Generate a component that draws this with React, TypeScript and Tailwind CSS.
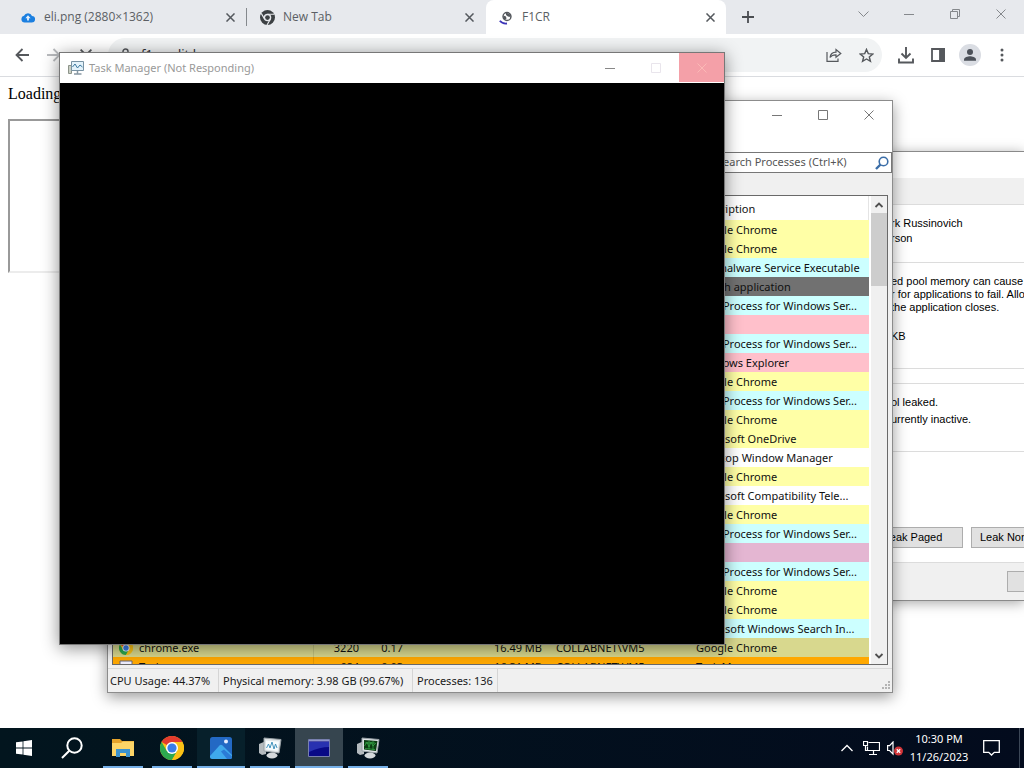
import React from "react";

type Row = { color: string; description: string; name?: string; pid?: string; cpu?: string; mem?: string; user?: string };

const YELLOW = "bg-[#ffffa6]";
const CYAN = "bg-[#ccffff]";
const PINK = "bg-[#ffc0cb]";

const rows: Row[] = [
  { color: YELLOW, description: "Google Chrome" },
  { color: YELLOW, description: "Google Chrome" },
  { color: CYAN, description: "Antimalware Service Executable" },
  { color: "bg-[#717171]", description: "Search application" },
  { color: CYAN, description: "Host Process for Windows Ser..." },
  { color: PINK, description: "" },
  { color: CYAN, description: "Host Process for Windows Ser..." },
  { color: PINK, description: "Windows Explorer" },
  { color: YELLOW, description: "Google Chrome" },
  { color: CYAN, description: "Host Process for Windows Ser..." },
  { color: YELLOW, description: "Google Chrome" },
  { color: YELLOW, description: "Microsoft OneDrive" },
  { color: "bg-white", description: "Desktop Window Manager" },
  { color: YELLOW, description: "Google Chrome" },
  { color: "bg-white", description: "Microsoft Compatibility Tele..." },
  { color: YELLOW, description: "Google Chrome" },
  { color: CYAN, description: "Host Process for Windows Ser..." },
  { color: "bg-[#e4b6d2]", description: "" },
  { color: CYAN, description: "Host Process for Windows Ser..." },
  { color: YELLOW, description: "Google Chrome" },
  { color: YELLOW, description: "Google Chrome" },
  { color: CYAN, description: "Microsoft Windows Search In..." },
  { color: "bg-[#d8d88e]", description: "Google Chrome", name: "chrome.exe", pid: "3220", cpu: "0.17", mem: "16.49 MB", user: "COLLABNET\\VM5" },
  { color: "bg-[#ffa800]", description: "Task Manager", name: "Taskmgr.exe", pid: "684", cpu: "0.03", mem: "16.31 MB", user: "COLLABNET\\VM5" },
];

function Cross({ size = 10, width = 1 }: { size?: number; width?: number }) {
  return (
    <svg width={size} height={size} viewBox="0 0 10 10" fill="none" stroke="currentColor" strokeWidth={width}>
      <path d="M0.5 0.5 9.5 9.5M9.5 0.5 0.5 9.5" />
    </svg>
  );
}
function Dash() {
  return (
    <svg width="10" height="10" viewBox="0 0 10 10" stroke="currentColor">
      <path d="M0 5.5H10" />
    </svg>
  );
}
function Square() {
  return (
    <svg width="10" height="10" viewBox="0 0 10 10" fill="none" stroke="currentColor">
      <path d="M.5.5h9v9h-9z" />
    </svg>
  );
}

function ChromeLogo({ size }: { size: number }) {
  return (
    <svg width={size} height={size} viewBox="0 0 24 24">
      <circle cx="12" cy="12" r="12" fill="#fbc116" />
      <path d="M12 12 1.6 6A12 12 0 0 1 22.4 6H12Z" fill="#e33b2e" />
      <path d="M1.6 6A12 12 0 0 0 12 24l5.2-9L12 12 6.8 15Z" fill="#2da94f" />
      <path d="M12 6h10.4A12 12 0 0 1 12 24l5.2-9Z" fill="#fbc116" />
      <circle cx="12" cy="12" r="6" fill="#fff" />
      <circle cx="12" cy="12" r="4.6" fill="#3a7de8" />
    </svg>
  );
}

function MonoChrome() {
  return (
    <svg width="15" height="15" viewBox="0 0 24 24">
      <circle cx="12" cy="12" r="12" fill="#3c4043" />
      <circle cx="12" cy="12" r="6" fill="#e7e9ed" />
      <circle cx="12" cy="12" r="3.8" fill="#3c4043" />
      <path d="M12 6.8h11M7.4 14.6 2 5.4M16.6 14.6 11.2 24" stroke="#e7e9ed" strokeWidth="1.8" />
    </svg>
  );
}

function Tab({ icon, title, active, divided }: { icon: React.ReactNode; title: string; active?: boolean; divided?: boolean }) {
  return (
    <div
      className={
        active
          ? "flex h-full w-60 shrink items-center gap-2 rounded-t-lg bg-white pl-3 pr-2"
          : "flex h-full w-[239px] shrink items-center gap-2 pl-3"
      }
    >
      <span className="flex w-4 shrink-0 justify-center">{icon}</span>
      <span className="flex-1 truncate text-[#5b5f64]">{title}</span>
      <button aria-label={"Close " + title} className="flex size-4 items-center justify-center text-[#55595e]">
        <Cross size={9} width={1.7} />
      </button>
      {!active && <span className={divided ? "h-[18px] w-px bg-[#85898d]" : "w-px"} />}
    </div>
  );
}

function Browser() {
  return (
    <div className="flex flex-1 flex-col">
      <div className="flex h-[34px] bg-[#e7e9ed] pl-2 text-[12px] font-['Open_Sans','Noto_Sans',sans-serif]">
        <Tab
          divided
          title="eli.png (2880×1362)"
          icon={
            <svg width="14" height="12" viewBox="0 0 14 12">
              <path d="M3.6 11.5A3.4 3.4 0 0 1 3 4.8 4.3 4.3 0 0 1 11 4.9A3.3 3.3 0 0 1 10.6 11.5Z" fill="#1b7fe0" />
              <path d="M7 4.3 9.6 7.2H7.900V9.600H6.100V7.200H4.400Z" fill="#e7f0fa" />
            </svg>
          }
        />
        <Tab title="New Tab" icon={<MonoChrome />} />
        <Tab
          active
          title="F1CR"
          icon={
            <svg width="14" height="15" viewBox="0 0 14 15" fill="none">
              <circle cx="8" cy="6.500" r="4" stroke="#55595e" strokeWidth="1.400" />
              <path d="M4.500 5.500 7 6.500 7.500 8.500 6 10 4.200 8ZM7 2.500 11.500 4.500 11.500 7 9 6.500 7 5Z" fill="#55595e" />
              <path d="M.8 10.800C2.500 13 5 13.800 8 13.500" stroke="#3c35b8" strokeWidth="1.800" />
            </svg>
          }
        />
        <button aria-label="New tab" className="ml-2 flex w-7 items-center justify-center text-[#4a4d51]">
          <svg width="12" height="12" viewBox="0 0 12 12" stroke="currentColor" strokeWidth="1.800">
            <path d="M6 0v12M0 6h12" />
          </svg>
        </button>
        <div className="ml-auto flex h-7 text-[#85888c]">
          <button aria-label="Search tabs" className="flex w-[46px] items-center justify-center">
            <svg width="11" height="10" viewBox="0 0 11 10" fill="none" stroke="currentColor">
              <path d="M.5 2.500 5.500 7.500 10.500 2.500" />
            </svg>
          </button>
          <button aria-label="Minimize" className="flex w-[46px] items-center justify-center"><Dash /></button>
          <button aria-label="Restore" className="flex w-[46px] items-center justify-center">
            <svg width="10" height="10" viewBox="0 0 10 10" fill="none" stroke="currentColor">
              <path d="M.5 2.500h7v7h-7zM2.500 2.500v-2h7v7h-2" />
            </svg>
          </button>
          <button aria-label="Close" className="flex w-[46px] items-center justify-center"><Cross /></button>
        </div>
      </div>

      <div className="flex h-[43px] items-center border-b border-[#dadce0] bg-white px-1.5 text-[#55585c]">
        <button aria-label="Back" className="flex size-8 items-center justify-center">
          <svg width="14" height="14" viewBox="0 0 14 14" fill="none" stroke="currentColor" strokeWidth="1.800">
            <path d="M14 7H1.500M7.500 1 1.500 7l6 6" />
          </svg>
        </button>
        <button aria-label="Forward" className="flex size-8 items-center justify-center text-[#b9bbbe]">
          <svg width="14" height="14" viewBox="0 0 14 14" fill="none" stroke="currentColor" strokeWidth="1.800">
            <path d="M0 7h12.500M6.500 1l6 6-6 6" />
          </svg>
        </button>
        <button aria-label="Stop" className="flex size-8 items-center justify-center"><Cross size={12} width={1.5} /></button>
        <div className="ml-1.5 flex h-[34px] flex-1 items-center rounded-full bg-[#f1f3f4] pl-3">
          <svg width="11" height="14" viewBox="0 0 11 14" fill="none" stroke="currentColor" strokeWidth="1.500">
            <path d="M1 6h9v7H1zM3 6V3.500a2.500 2.500 0 0 1 5 0V6" />
          </svg>
          <input aria-label="Address" defaultValue="f1cr.edit.k" className="ml-2.5 min-w-0 flex-1 bg-transparent text-[13px] text-[#303236] outline-none" />
          <button aria-label="Share" className="flex size-8 items-center justify-center">
            <svg width="16" height="14" viewBox="0 0 16 14" fill="none" stroke="currentColor" strokeWidth="1.200">
              <path d="M1 4v9.300h11V10.500M4 9.500C4.500 6 6.500 4.300 10 4.200V1.500L14.800 5.500 10 9.300V6.800C7.500 6.700 5.500 7.500 4 9.500Z" />
            </svg>
          </button>
          <button aria-label="Bookmark" className="flex size-8 items-center justify-center">
            <svg width="15" height="15" viewBox="0 0 16 16" fill="none" stroke="currentColor" strokeWidth="1.500">
              <path d="M8 1.500 9.900 6 14.700 6.400 11 9.500 12.200 14.200 8 11.700 3.800 14.200 5 9.500 1.300 6.400 6.100 6Z" />
            </svg>
          </button>
        </div>
        <button aria-label="Downloads" className="ml-2 flex size-8 items-center justify-center">
          <svg width="16" height="17" viewBox="0 0 16 17" fill="none" stroke="currentColor" strokeWidth="1.900">
            <path d="M8 0v10.500M3.500 6.500 8 11l4.500-4.500M1 11.500v4h14v-4" />
          </svg>
        </button>
        <button aria-label="Side panel" className="flex size-8 items-center justify-center">
          <svg width="14" height="14" viewBox="0 0 14 14" fill="none" stroke="currentColor" strokeWidth="1.800">
            <path d="M1 1h12v12H1z" />
            <path d="M9 1h4v12H9z" fill="currentColor" />
          </svg>
        </button>
        <button aria-label="Profile" className="flex size-8 items-center justify-center">
          <svg width="22" height="22" viewBox="0 0 22 22">
            <circle cx="11" cy="11" r="11" fill="#dadde3" />
            <circle cx="11" cy="8" r="3" fill="#4b5058" />
            <path d="M5 16.800v-1.300C5 13 9 12.200 11 12.200s6 .8 6 3.300v1.300Z" fill="#4b5058" />
          </svg>
        </button>
        <button aria-label="Menu" className="flex size-8 items-center justify-center">
          <svg width="4" height="14" viewBox="0 0 4 14" fill="currentColor">
            <circle cx="2" cy="2" r="1.500" />
            <circle cx="2" cy="7" r="1.500" />
            <circle cx="2" cy="12" r="1.500" />
          </svg>
        </button>
      </div>

      <main className="flex-1 bg-white p-2 font-['Liberation_Serif',serif] text-[16px] leading-[18px] text-black">
        <p>Loading</p>
        <div className="mt-4 h-[154px] w-[304px] border-2 border-b-[#ececec] border-l-[#999] border-r-[#ececec] border-t-[#999]" />
      </main>
    </div>
  );
}

function SplitLine({ start, rest }: { start: string; rest: string }) {
  return (
    <p className="flex whitespace-pre">
      <span className="w-10 shrink-0 text-right">{start}</span>
      <span>{rest}</span>
    </p>
  );
}

function LeakWindow() {
  return (
    <section className="absolute left-[851px] right-0 top-[151px] flex h-[450px] flex-col border-y border-[#8a8a8a] bg-white font-['Liberation_Sans',sans-serif] text-[11px] leading-[13px] text-black shadow-[0_2px_12px_rgba(0,0,0,0.35)]">
      <div className="h-[26px] bg-white" />
      <div className="h-[27px] border-b border-[#dcdcdc] bg-[#f0f0f0]" />
      <div className="flex h-[58px] flex-col gap-0.5 border-b border-[#dcdcdc] pt-3">
        <SplitLine start="Ma" rest="rk Russinovich" />
        <SplitLine start="Pea" rest="rson" />
      </div>
      <div className="h-[106px] border-b border-[#dcdcdc] pt-3">
        <SplitLine start="Leak" rest="ed pool memory can cause the" />
        <SplitLine start="o" rest="r for applications to fail. Allocations" />
        <SplitLine start="" rest="the application closes." />
        <div className="pt-4">
          <SplitLine start="" rest="KB" />
        </div>
      </div>
      <div className="mt-3.5 flex h-[69px] flex-col gap-1 border-b border-t border-[#dcdcdc] pt-3">
        <SplitLine start="po" rest="ol leaked." />
        <SplitLine start="c" rest="urrently inactive." />
      </div>
      <div className="flex flex-1 items-end gap-2 overflow-hidden border-b border-[#dcdcdc] pb-3.5">
        <button className="h-[21px] w-28 shrink-0 border border-[#adadad] bg-[#e1e1e1] pl-3">Leak Paged</button>
        <button className="h-[21px] w-28 shrink-0 whitespace-nowrap border border-[#adadad] bg-[#e1e1e1] px-2 text-left">Leak Nonpaged</button>
      </div>
      <div className="flex h-[37px] items-center overflow-hidden bg-[#f0f0f0]">
        <button aria-label="Crash" className="ml-auto h-[21px] w-[17px] border border-r-0 border-[#adadad] bg-[#e1e1e1]" />
      </div>
    </section>
  );
}

function ProcessExplorer() {
  return (
    <section className="absolute left-[107px] top-[100px] flex w-[786px] flex-col border border-[#8c8c8c] bg-[#f0f0f0] shadow-[0_4px_14px_rgba(0,0,0,0.4)]">
      <div className="flex h-[51px] justify-end bg-white text-[#777]">
        <button aria-label="Minimize Process Explorer" className="flex h-7 w-[46px] items-center justify-center"><Dash /></button>
        <button aria-label="Maximize Process Explorer" className="flex h-7 w-[46px] items-center justify-center"><Square /></button>
        <button aria-label="Close Process Explorer" className="flex h-7 w-[46px] items-center justify-center"><Cross /></button>
      </div>
      <div className="flex h-[21px] justify-end">
        <label className="flex w-48 items-center border border-[#777] bg-white pl-1 pr-0.5">
          <input aria-label="Search processes" placeholder="Search Processes (Ctrl+K)" className="min-w-0 flex-1 bg-transparent pl-3 text-[11px] outline-none placeholder:text-[#555]" />
          <svg width="14" height="14" viewBox="0 0 14 14" fill="none" stroke="#3b6ea8">
            <circle cx="8.500" cy="5.500" r="4.300" strokeWidth="1.600" />
            <path d="M5.500 8.500 1 13" strokeWidth="2.400" />
          </svg>
        </label>
      </div>
      <div className="mx-1 mt-[22px] flex h-[470px] border border-[#696969] bg-white">
        <div className="min-w-0 flex-1 overflow-hidden">
          <table className="w-full table-fixed border-collapse whitespace-nowrap text-[11px] leading-[19px] text-[#101010]">
            <thead>
              <tr className="h-6 text-left">
                <th className="w-[200px] border-r border-[#e4e4e4] font-normal" />
                <th className="w-[50px] font-normal" />
                <th className="w-[46px] font-normal" />
                <th className="w-[139px] font-normal" />
                <th className="w-[140px] font-normal" />
                <th className="border-r border-[#e4e4e4] py-0 pl-2 font-normal">Description</th>
              </tr>
            </thead>
            <tbody>
              {rows.map((r, i) => (
                <tr key={i} className={"h-[19px] " + r.color}>
                  <td className="border-r border-black/10 p-0 pl-1.5">
                    {r.name && (
                      <span className="flex items-center gap-1.5">
                        {r.name === "chrome.exe" ? (
                          <ChromeLogo size={14} />
                        ) : (
                          <svg width="14" height="14" viewBox="0 0 14 14"><path d="M1 1h12v9H1z" fill="#eef" stroke="#667" /></svg>
                        )}
                        {r.name}
                      </span>
                    )}
                  </td>
                  <td className="p-0 pr-1 text-right">{r.pid}</td>
                  <td className="p-0 pr-1.5 text-right">{r.cpu}</td>
                  <td className="p-0 pr-1.5 text-right">{r.mem}</td>
                  <td className="p-0 pl-2">{r.user}</td>
                  <td className="p-0 pl-2">{r.description}</td>
                </tr>
              ))}
            </tbody>
          </table>
        </div>
        <div className="ml-0.5 flex w-4 flex-col items-center bg-[#f0f0f0] text-[#505050]">
          <svg width="16" height="17" viewBox="0 0 16 17" fill="none" stroke="currentColor" strokeWidth="1.800"><path d="M4.500 11 8 7.500 11.500 11" /></svg>
          <div className="h-[73px] w-full bg-[#cdcdcd]" />
          <svg className="mt-auto" width="16" height="17" viewBox="0 0 16 17" fill="none" stroke="currentColor" strokeWidth="1.800"><path d="M4.500 7 8 10.500 11.500 7" /></svg>
        </div>
      </div>
      <div className="mt-[3px] flex items-stretch border-t border-[#d9d9d9] text-[11px] leading-[23px] text-[#1a1a1a]">
        <span className="w-[111px] whitespace-nowrap border-r border-[#d5d5d5] pl-0.5">CPU Usage: 44.37%</span>
        <span className="w-[194px] whitespace-nowrap border-r border-[#d5d5d5] pl-1">Physical memory: 3.98 GB (99.67%)</span>
        <span className="w-[85px] whitespace-nowrap border-r border-[#d5d5d5] pl-1">Processes: 136</span>
        <svg className="ml-auto self-end" width="11" height="11" viewBox="0 0 11 11" fill="#b4b4b4">
          <path d="M7 0h2v2H7zM7 3h2v2H7zM7 6h2v2H7zM4 3h2v2H4zM4 6h2v2H4zM1 6h2v2H1z" />
        </svg>
      </div>
    </section>
  );
}

function TaskManager() {
  return (
    <section className="absolute left-[59px] top-[52px] flex h-[593px] w-[666px] flex-col border border-[#777] bg-black shadow-[0_3px_16px_rgba(0,0,0,0.45)]">
      <header className="flex h-[30px] items-stretch bg-white pl-2 text-[11px] text-[#999]">
        <svg className="self-center" width="16" height="16" viewBox="0 0 16 16" fill="none">
          <path d="M.5 5.500h3v8h-3z" fill="#c9cfc4" stroke="#8d948a" />
          <path d="M3.500 1.500h12v9h-12z" fill="#e3f2fa" stroke="#7892a3" />
          <path d="M4.500 7 7 4l2.500 4L12 5l2.500 2" stroke="#3c789f" />
          <path d="M9.500 11v2.500M6 14h7.500" stroke="#8797a2" strokeWidth="1.500" />
        </svg>
        <h1 className="ml-[5px] flex-1 self-center">Task Manager (Not Responding)</h1>
        <button aria-label="Minimize Task Manager" className="flex w-[46px] items-center justify-center text-[#888]"><Dash /></button>
        <button aria-label="Maximize Task Manager" className="flex w-[46px] items-center justify-center text-[#e9e5ec]"><Square /></button>
        <button aria-label="Close Task Manager" className="mb-px flex w-[45px] items-center justify-center bg-[#f4a0a8] text-[#fbb9b6]"><Cross /></button>
      </header>
      <div className="flex-1 bg-black" />
    </section>
  );
}

function TaskButton({ label, state, children }: { label: string; state?: "wide" | "active"; children: React.ReactNode }) {
  const tone = state === "active" ? "bg-[#36454f]" : state === "wide" ? "bg-[#07202b]" : "";
  return (
    <button aria-label={label} className={"flex h-full w-12 flex-col items-center " + tone}>
      <span className="flex flex-1 items-center pt-0.5">{children}</span>
      <span className={state ? "h-0.5 w-full bg-[#76b0e8]" : "h-0.5 w-10 bg-[#76b0e8]"} />
    </button>
  );
}

function Taskbar() {
  return (
    <footer className="flex h-10 items-stretch bg-linear-to-r from-[#02151e] to-[#030b1d] text-white">
      <button aria-label="Start" className="flex w-12 items-center justify-center">
        <svg width="16" height="16" viewBox="0 0 16 16" fill="#fff">
          <path d="M0 2.300 6.600 1.400V7.600H0zM7.400 1.300 16 0V7.600H7.400zM0 8.400H6.600V14.600L0 13.700zM7.400 8.400H16V16L7.400 14.700z" />
        </svg>
      </button>
      <button aria-label="Search" className="flex w-12 items-center justify-center">
        <svg width="22" height="22" viewBox="0 0 22 22" fill="none" stroke="#fff" strokeWidth="2">
          <circle cx="13.500" cy="8.500" r="7.200" />
          <path d="M8.300 13.700 1 21" />
        </svg>
      </button>
      <div className="ml-[3px] flex gap-px">
        <TaskButton label="File Explorer">
          <svg width="22" height="20" viewBox="0 0 22 20">
            <path d="M0 1h8l2 2h12v5H0z" fill="#e5a32b" />
            <path d="M0 5h9l2-1.500h11V18H0z" fill="#fdd567" />
            <path d="M4 19v-8h14v8h-4v-4H8v4z" fill="#3c93cf" />
          </svg>
        </TaskButton>
        <TaskButton label="Chrome"><ChromeLogo size={24} /></TaskButton>
        <TaskButton label="Photos" state="wide">
          <svg width="22" height="22" viewBox="0 0 22 22">
            <rect width="22" height="22" rx="2.500" fill="#2369c4" />
            <path d="M0 19 9.500 8.500q1.500-1.300 3 0L22 18v1.500a2.500 2.500 0 0 1-2.500 2.500h-17A2.500 2.500 0 0 1 0 19.500z" fill="#3fa9ec" />
            <path d="M11 14.500 14 12.500 22 19.500a2.500 2.500 0 0 1-2.500 2.500H17z" fill="#2b7bd6" />
            <circle cx="16" cy="4.500" r="2" fill="#e6edff" />
          </svg>
        </TaskButton>
        <TaskButton label="Task Manager">
          <svg width="24" height="22" viewBox="0 0 24 22">
            <path d="M1 7 8 4v13l-4 1-3-2z" fill="#b4babe" />
            <path d="M6 1 23 2.500 21 16 6 14z" fill="#dfe4e7" stroke="#98a0a5" />
            <path d="M8 3.500 21 4.500 19.500 14 8 12.500z" fill="#f7fbfd" />
            <path d="m8.500 11 2-4 1.500 4 2-6 2 7 1.500-5 1.500 4" fill="none" stroke="#4594bd" />
            <ellipse cx="14" cy="18.500" rx="5.500" ry="2.900" fill="#d5d9dc" />
          </svg>
        </TaskButton>
        <TaskButton label="Console" state="active">
          <svg width="22" height="18" viewBox="0 0 22 18">
            <path d="M.5.500h21v17H.5z" fill="#080986" stroke="#777fae" />
            <path d="M1 3h20v5Q12 8 1 13z" fill="#2831b0" />
            <path d="M1 1h20v1.500H1z" fill="#8e95cb" />
          </svg>
        </TaskButton>
        <TaskButton label="Process Explorer">
          <svg width="24" height="22" viewBox="0 0 24 22">
            <path d="M1 7 8 4v13l-4 1-3-2z" fill="#b4babe" />
            <path d="M6 1 23 2.500 21 16 6 14z" fill="#dfe4e7" stroke="#98a0a5" />
            <path d="M8 3 21.500 4 20 14 8 12.500z" fill="#0b3d12" />
            <path d="m8.500 9 2.500-4 2 5 2-5 2 4 3-3M9 11.500l10 1M9 6h10M13 3.500v9M17 4v9" fill="none" stroke="#35a346" strokeWidth=".8" />
            <ellipse cx="14" cy="18.500" rx="5.500" ry="2.900" fill="#d5d9dc" />
          </svg>
        </TaskButton>
      </div>
      <div className="ml-auto flex items-center">
        <button aria-label="Show hidden icons" className="flex w-6 justify-center">
          <svg width="12" height="8" viewBox="0 0 12 8" fill="none" stroke="#fff" strokeWidth="1.300"><path d="M.5 7 6 1.500 11.500 7" /></svg>
        </button>
        <button aria-label="Network" className="flex w-6 justify-center">
          <svg width="17" height="14" viewBox="0 0 17 14" fill="none" stroke="#fff">
            <path d="M5.500 1.500h11v8h-12v-4M10.500 10v3M6 13.500h8M.5.500h4v4h-4zM2.500 4.500v5h2" strokeWidth="1.200" />
          </svg>
        </button>
        <button aria-label="Volume muted" className="flex w-6 justify-center">
          <svg width="16" height="15" viewBox="0 0 16 15" fill="none">
            <path d="M.6 4.600h2L6 1v12L2.600 9.500h-2z" stroke="#fff" strokeWidth="1.200" />
            <circle cx="11.500" cy="10" r="4.500" fill="#d13438" />
            <path d="m9.800 8.300 3.400 3.400m0-3.400-3.400 3.400" stroke="#fff" strokeWidth="1.300" />
          </svg>
        </button>
        <time className="w-16 whitespace-nowrap text-center text-[11px] leading-[18px]">
          10:30 PM
          <br />
          11/26/2023
        </time>
        <button aria-label="Notifications" className="flex w-10 justify-center">
          <svg width="17" height="16" viewBox="0 0 17 16" fill="none" stroke="#fff" strokeWidth="1.300">
            <path d="M.7.7h15.600v11.600h-5L8.500 15 5.700 12.300h-5z" />
          </svg>
        </button>
        <span className="ml-2 mr-1 h-10 w-px bg-[#3c4757]" />
      </div>
    </footer>
  );
}

export default function App() {
  return (
    <div className="relative flex min-h-screen flex-col overflow-hidden bg-white font-['Noto_Sans','Open_Sans',sans-serif]">
      <Browser />
      <LeakWindow />
      <ProcessExplorer />
      <TaskManager />
      <Taskbar />
    </div>
  );
}
